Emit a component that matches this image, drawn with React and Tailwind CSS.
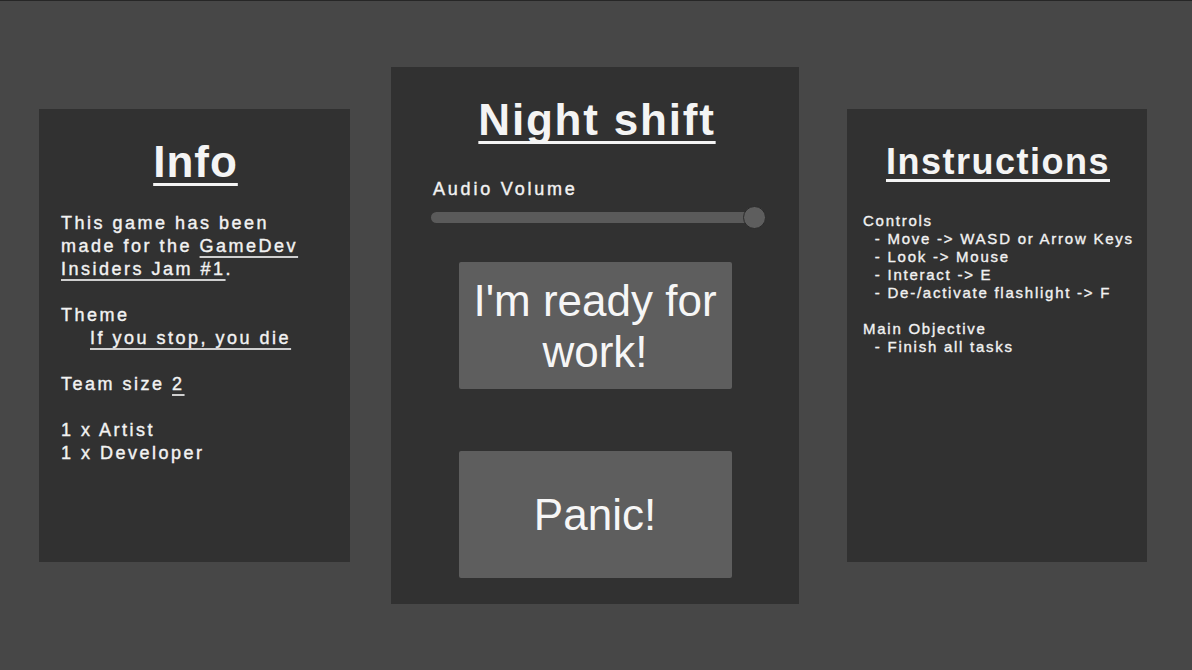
import React from "react";

const font = { fontFamily: '"Liberation Sans", Arial, sans-serif' };

function Title({ children, className }) {
  return (
    <h1
      className={
        "text-center font-bold leading-none text-[#f4f4f4] underline decoration-[3px] [text-decoration-skip-ink:none] " +
        className
      }
    >
      {children}
    </h1>
  );
}

function Link({ children }) {
  return (
    <span className="underline decoration-[2px] decoration-[#cfcfcf] underline-offset-[4px] [text-decoration-skip-ink:none]">
      {children}
    </span>
  );
}

function InfoPanel() {
  return (
    <section className="w-[311px] h-[453px] bg-[#313131] pt-[31px] px-[22px]">
      <Title className="text-[44px] tracking-[1px] underline-offset-[6px] pl-[2px]">Info</Title>
      <div className="mt-[28px] text-[18px] leading-[23px] tracking-[2.5px] text-[#f2f2f2] [-webkit-text-stroke:0.4px_#f2f2f2]">
        <p>This game has been</p>
        <p>
          made for the <Link>GameDev</Link>
        </p>
        <p>
          <Link>Insiders Jam #1</Link>.
        </p>
        <p>&nbsp;</p>
        <p>Theme</p>
        <p className="pl-[29px]">
          <Link>If you stop, you die</Link>
        </p>
        <p>&nbsp;</p>
        <p>
          Team size <Link>2</Link>
        </p>
        <p>&nbsp;</p>
        <p>1 x Artist</p>
        <p>1 x Developer</p>
      </div>
    </section>
  );
}

function MenuButton({ children }) {
  return (
    <button className="w-[273px] h-[127px] mx-auto flex items-center justify-center bg-[#5e5e5e] rounded-[2px] text-[44px] leading-[51px] text-[#f6f6f6] text-center">
      <span>{children}</span>
    </button>
  );
}

function CenterPanel() {
  return (
    <section className="w-[408px] h-[537px] bg-[#313131] pt-[31px] flex flex-col">
      <Title className="text-[44px] tracking-[1.8px] underline-offset-[6px] pl-[4px]">Night shift</Title>
      <p className="mt-[36px] pl-[42px] text-[18px] leading-[23px] tracking-[2.8px] text-[#f2f2f2] [-webkit-text-stroke:0.4px_#f2f2f2]">
        Audio Volume
      </p>
      <div className="mt-[11px] ml-[40px] relative w-[335px] h-[11px]">
        <div className="w-[324px] h-[11px] rounded-full bg-[#5a5a5a]" />
        <div className="absolute right-0 top-[-6px] w-[23px] h-[23px] rounded-full bg-[#5e5e5e] border border-[#2b2b2b]" />
      </div>
      <div className="mt-[39px] flex flex-col gap-[62px]">
        <MenuButton>
          I'm ready for
          <br />
          work!
        </MenuButton>
        <MenuButton>Panic!</MenuButton>
      </div>
    </section>
  );
}

function InstructionsPanel() {
  const lines = [
    "Controls",
    "  - Move -> WASD or Arrow Keys",
    "  - Look -> Mouse",
    "  - Interact -> E",
    "  - De-/activate flashlight -> F",
    " ",
    "Main Objective",
    "  - Finish all tasks",
  ];
  return (
    <section className="w-[300px] h-[453px] bg-[#313131] pt-[35px] px-[16px]">
      <Title className="text-[36px] tracking-[1.5px] underline-offset-[5px] pl-[2px]">Instructions</Title>
      <div className="mt-[32px] text-[15px] leading-[18px] tracking-[1.75px] text-[#f2f2f2] whitespace-pre [-webkit-text-stroke:0.35px_#f2f2f2]">
        {lines.map((l, i) => (
          <p key={i}>{l}</p>
        ))}
      </div>
    </section>
  );
}

export default function App() {
  return (
    <div
      style={font}
      className="w-[1192px] h-[670px] bg-[#474747] border-t border-[#262626] flex items-center pl-[39px] overflow-hidden"
    >
      <InfoPanel />
      <div className="ml-[41px]">
        <CenterPanel />
      </div>
      <div className="ml-[48px]">
        <InstructionsPanel />
      </div>
    </div>
  );
}
